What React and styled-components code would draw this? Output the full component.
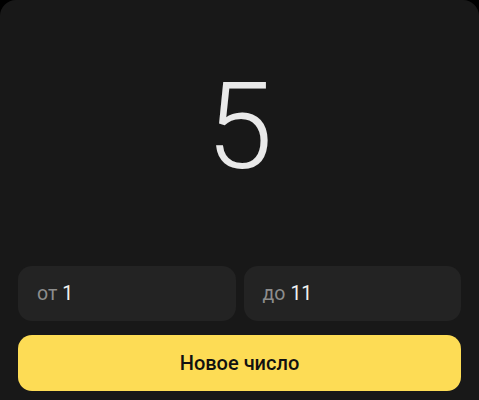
import React, { useState } from 'react';
import styled, { createGlobalStyle } from 'styled-components';

const GlobalStyle = createGlobalStyle`
  html, body {
    margin: 0;
    padding: 0;
    background: #000;
  }
  body {
    font-family: Roboto, "Noto Sans", sans-serif;
  }
`;

const Sheet = styled.div`
  height: 400px;
  box-sizing: border-box;
  background: #181818;
  border-radius: 16px 16px 0 0;
  display: flex;
  flex-direction: column;
  padding: 0 18px 9px;
`;

const Result = styled.div`
  flex: 1;
  display: flex;
  align-items: center;
  justify-content: center;
  padding-bottom: 12px;
  color: #e9e9e9;
  font-size: 120px;
  font-weight: 300;
  line-height: 1;
`;

const Range = styled.div`
  display: grid;
  grid-template-columns: 1fr 1fr;
  gap: 8px;
  margin-bottom: 14px;
`;

const Field = styled.label`
  height: 55px;
  border-radius: 14px;
  background: #232323;
  display: flex;
  align-items: center;
  padding: 0 19px;
  font-size: 19.5px;
  gap: 5px;
`;

const Prefix = styled.span`
  color: #8d8d8d;
`;

const Value = styled.span`
  color: #f2f2f2;
`;

const Button = styled.button`
  height: 56px;
  border: none;
  border-radius: 14px;
  background: #fddc55;
  color: #111;
  font-family: Roboto, "Noto Sans", sans-serif;
  font-size: 20px;
  font-weight: 500;
  cursor: pointer;
`;

export default function App() {
  const [min] = useState(1);
  const [max] = useState(11);
  const [num, setNum] = useState(5);

  const roll = () => setNum(min + Math.floor(Math.random() * (max - min + 1)));

  return (
    <>
      <GlobalStyle />
      <Sheet>
        <Result>{num}</Result>
        <Range>
          <Field>
            <Prefix>от</Prefix>
            <Value>{min}</Value>
          </Field>
          <Field>
            <Prefix>до</Prefix>
            <Value>{max}</Value>
          </Field>
        </Range>
        <Button onClick={roll}>Новое число</Button>
      </Sheet>
    </>
  );
}
